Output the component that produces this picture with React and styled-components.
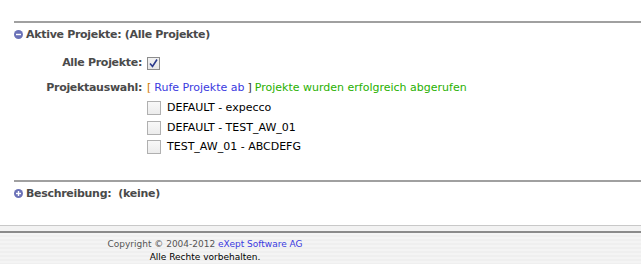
import React from 'react';
import styled, { createGlobalStyle } from 'styled-components';

const GlobalStyle = createGlobalStyle`
  html, body {
    margin: 0;
    padding: 0;
    background: #fff;
  }
  body {
    font-family: 'DejaVu Sans', Verdana, sans-serif;
    font-size: 11px;
    color: #000;
  }
`;

const Page = styled.div`
  width: 641px;
  height: 264px;
  overflow: hidden;
  display: flex;
  flex-direction: column;
`;

const Content = styled.div`
  padding: 21px 0 0 14px;
  flex: 1;
`;

const Section = styled.div`
  border-top: 2px solid #a0a0a0;
  padding-top: 4px;
  height: ${p => p.$height}px;
  box-sizing: border-box;
`;

const SectionHeader = styled.div`
  display: flex;
  align-items: center;
  gap: 3px;
  height: 14px;
  font-weight: bold;
  letter-spacing: -0.3px;
  color: #4a4a4a;
`;

const ToggleIcon = ({ open }) => (
  <svg width="9" height="9" viewBox="0 0 9 9">
    <circle cx="4.5" cy="4.5" r="4.5" fill="#6b72b8" />
    <rect x="2" y="3.8" width="5" height="1.4" fill="#fff" />
    {!open && <rect x="3.8" y="2" width="1.4" height="5" fill="#fff" />}
  </svg>
);

const Form = styled.div`
  display: grid;
  grid-template-columns: 128px auto;
  column-gap: 5px;
  row-gap: 11px;
  margin-top: 15px;
  align-items: center;
`;

const Label = styled.div`
  font-weight: bold;
  letter-spacing: -0.3px;
  color: #4a4a4a;
  text-align: right;
  line-height: 14px;
`;

const Value = styled.div`
  display: flex;
  align-items: center;
  gap: 4px;
  line-height: 14px;
`;

const Box = styled.span`
  width: 11px;
  height: 11px;
  border: 1px solid #8c8c8c;
  background: linear-gradient(#f2f2f2, #e6e6e6);
  display: inline-flex;
  align-items: center;
  justify-content: center;
  flex: none;
`;

const Bracket = styled.span`
  color: #333;
`;

const OrangeBracket = styled.span`
  color: #d07a00;
`;

const Link = styled.span`
  color: #3a3ae0;
  margin: 0 3px;
`;

const Success = styled.span`
  color: #28b000;
  margin-left: 3px;
`;

const ProjectList = styled.div`
  display: flex;
  flex-direction: column;
  gap: 5.5px;
  margin: 6px 0 0 133px;
`;

const Project = styled.div`
  display: flex;
  align-items: center;
  gap: 6px;
  line-height: 14px;
`;

const EmptyBox = styled.span`
  width: 12px;
  height: 12px;
  border: 1px solid #b0b0b0;
  background: linear-gradient(#f8f8f8, #ececec);
  flex: none;
`;

const Footer = styled.div`
  height: 40px;
  border-top: 1px solid #c8c8c8;
  background: #f2f2f2;
  padding-top: 5px;
`;

const FooterInner = styled.div`
  border-top: 2px solid #8a8a8a;
  height: 34px;
  background: repeating-linear-gradient(#f4f4f4 0 2px, #efefef 2px 4px);
  box-sizing: border-box;
  padding-top: 5px;
`;

const FooterText = styled.div`
  width: 410px;
  text-align: center;
  font-size: 9px;
  line-height: 13px;
  color: #555;
`;

const Dark = styled.div`
  color: #000;
`;

const Brand = styled.span`
  color: #3a3ae0;
`;

const projects = ['DEFAULT - expecco', 'DEFAULT - TEST_AW_01', 'TEST_AW_01 - ABCDEFG'];

export default function App() {
  return (
    <Page>
      <GlobalStyle />
      <Content>
        <Section $height={159}>
          <SectionHeader>
            <ToggleIcon open />
            <span>Aktive Projekte: (Alle Projekte)</span>
          </SectionHeader>
          <Form>
            <Label>Alle Projekte:</Label>
            <Value>
              <Box>
                <svg width="9" height="9" viewBox="0 0 9 9">
                  <path d="M1 4.5 L3.5 7.5 L8 0.5" stroke="#2b3a8c" strokeWidth="1.6" fill="none" />
                </svg>
              </Box>
            </Value>
            <Label>Projektauswahl:</Label>
            <Value>
              <span>
                <OrangeBracket>[</OrangeBracket>
                <Link>Rufe Projekte ab</Link>
                <Bracket>]</Bracket>
                <Success>Projekte wurden erfolgreich abgerufen</Success>
              </span>
            </Value>
          </Form>
          <ProjectList>
            {projects.map(p => (
              <Project key={p}>
                <EmptyBox />
                <span>{p}</span>
              </Project>
            ))}
          </ProjectList>
        </Section>
        <Section $height={45}>
          <SectionHeader>
            <ToggleIcon />
            <span>Beschreibung:&nbsp; (keine)</span>
          </SectionHeader>
        </Section>
      </Content>
      <Footer>
        <FooterInner>
          <FooterText>
            Copyright © 2004-2012 <Brand>eXept Software AG</Brand>
            <Dark>Alle Rechte vorbehalten.</Dark>
          </FooterText>
        </FooterInner>
      </Footer>
    </Page>
  );
}
